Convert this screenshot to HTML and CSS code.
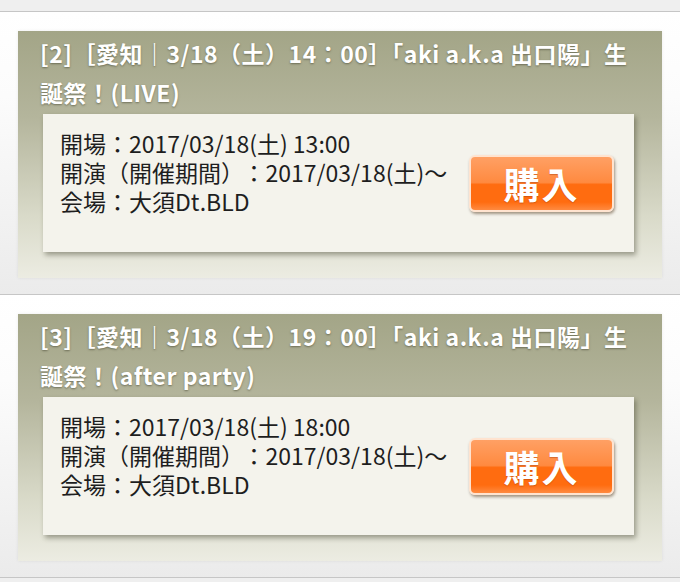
FILE: index.html
```html
<!DOCTYPE html>
<html lang="ja">
<head>
<meta charset="utf-8">
<title>チケット</title>
<link rel="stylesheet" href="styles.css">
</head>
<body>
<div class="list">
  <section class="item">
    <div class="card">
      <h2 class="title">[2]［愛知｜3/18（土）14：00］「aki a.k.a 出口陽」生誕祭！(LIVE)</h2>
      <div class="box">
        <div class="info">
          <div>開場：2017/03/18(土) 13:00</div>
          <div>開演（開催期間）<span class="sep">：</span>2017/03/18(土)〜</div>
          <div>会場：大須Dt.BLD</div>
        </div>
        <a class="buy" href="#">購入</a>
      </div>
    </div>
  </section>
  <section class="item">
    <div class="card">
      <h2 class="title">[3]［愛知｜3/18（土）19：00］「aki a.k.a 出口陽」生誕祭！(after party)</h2>
      <div class="box">
        <div class="info">
          <div>開場：2017/03/18(土) 18:00</div>
          <div>開演（開催期間）<span class="sep">：</span>2017/03/18(土)〜</div>
          <div>会場：大須Dt.BLD</div>
        </div>
        <a class="buy" href="#">購入</a>
      </div>
    </div>
  </section>
  <div class="tail"></div>
</div>
</body>
</html>
```
FILE: styles.css
```css
html, body {
  margin: 0;
  padding: 0;
  background: #efefef;
}
body {
  font-family: "Noto Sans CJK JP", "Noto Sans", sans-serif;
}
.list {
  padding-top: 11px;
  background: #efefef;
}
.item {
  border-top: 1px solid #c6c6c6;
  padding: 19px 18px 16px 18px;
  background: linear-gradient(to bottom, #ffffff 0%, #fcfcfc 30%, #ebebeb 100%);
}
.card {
  padding: 3px 22px 26px 22px;
  background: linear-gradient(to bottom, #a3a587 0%, #b4b59c 35%, #d9dac9 75%, #ececE2 100%);
  box-shadow: 0 0 3px rgba(0, 0, 0, 0.08);
}
.title {
  margin: 0;
  padding-right: 6px;
  font-size: 23px;
  font-weight: bold;
  line-height: 39px;
  color: #ffffff;
  letter-spacing: 0.5px;
  text-shadow: 0 1px 2px rgba(60, 60, 40, 0.55);
}
.box {
  display: flex;
  justify-content: space-between;
  height: 138px;
  box-sizing: border-box;
  margin: 2px 6px 0 3px;
  padding: 15px 20px 0 17px;
  background: #f4f3ec;
  box-shadow: 2px 3px 5px rgba(40, 40, 20, 0.4);
}
.info {
  font-size: 23px;
  line-height: 29px;
  color: #1e1e1e;
  white-space: nowrap;
}
.sep {
  margin-left: 10px;
}
.buy {
  align-self: center;
  margin-top: -15px;
  width: 145px;
  height: 57px;
  box-sizing: border-box;
  display: flex;
  align-items: center;
  justify-content: center;
  border: 2px solid #ffe3cf;
  border-radius: 6px;
  background: linear-gradient(to bottom, #ffa064 0%, #ff8a40 48%, #ff6c10 52%, #ff6c10 85%, #ff8a40 100%);
  box-shadow: 1px 2px 3px rgba(60, 30, 0, 0.45);
  color: #ffffff;
  font-size: 36px;
  font-weight: bold;
  line-height: 1;
  letter-spacing: 2px;
  text-decoration: none;
  text-shadow: 0 1px 1px rgba(150, 50, 0, 0.4);
}
.tail {
  border-top: 1px solid #c6c6c6;
  height: 20px;
  background: #efefef;
}
```
